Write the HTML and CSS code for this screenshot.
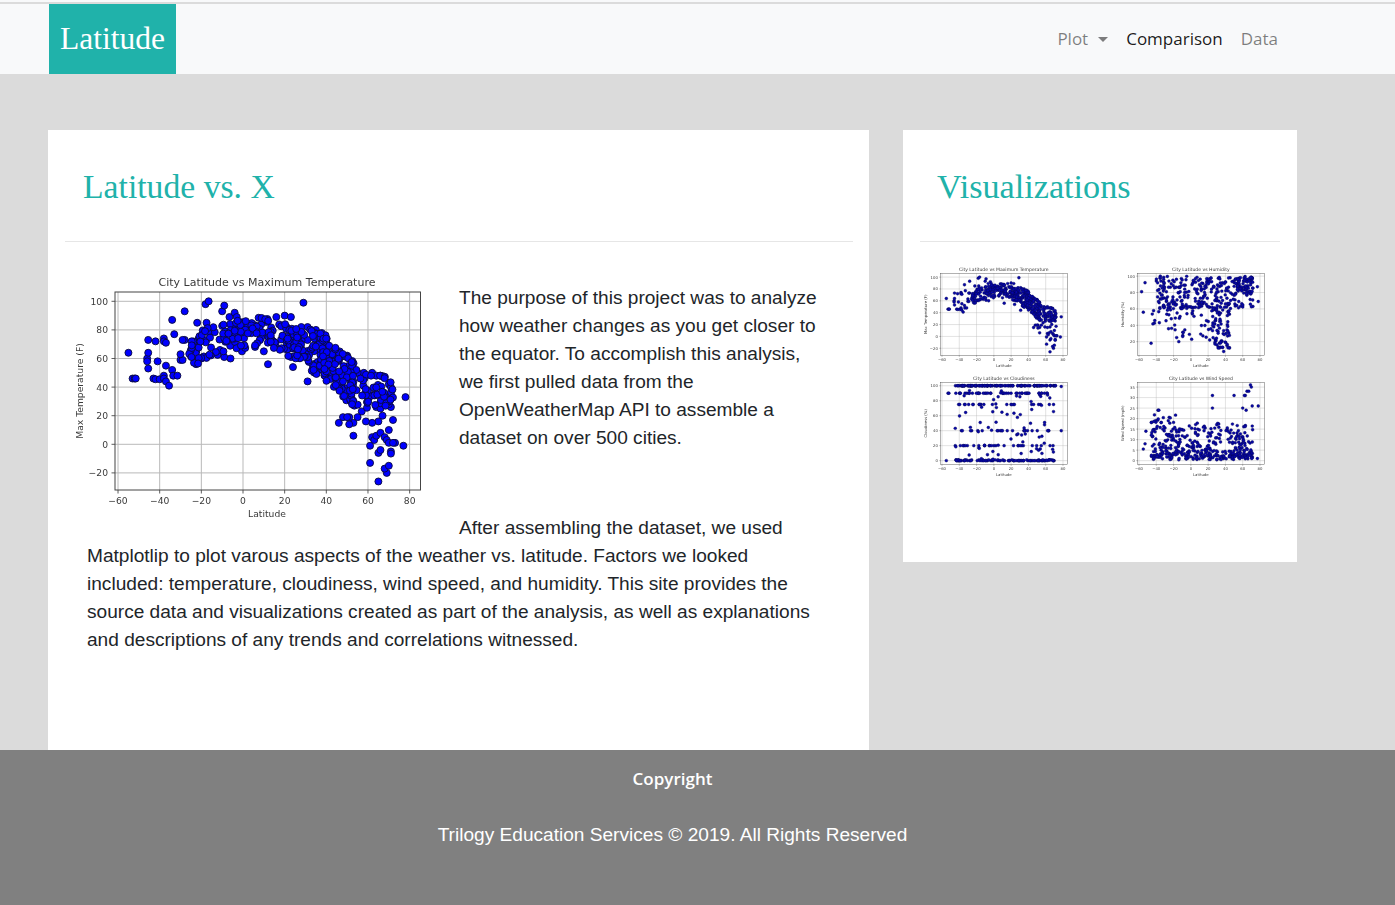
FILE: index.html
```html
<!DOCTYPE html>
<html lang="en">

<head>
    <meta charset="UTF-8">
    <meta name="viewport" content="width=device-width, initial-scale=1.0">
    <title>Latitude</title>

    <link rel="stylesheet" href="styles.css">
</head>

<body>

    <div class="top-strip"></div>
    <nav class="navbar">
        <a class="brand" href="#">Latitude</a>
        <ul class="nav-links">
            <li><a class="nav-link" href="#">Plot<span class="caret"></span></a></li>
            <li><a class="nav-link active" href="#">Comparison</a></li>
            <li><a class="nav-link" href="#">Data</a></li>
        </ul>
    </nav>

    <main class="content">
        <section class="card">
            <h1 class="card-title">Latitude vs. X</h1>
            <hr class="divider">
            <div class="copy">
                <svg class="plot plot-main" id="plot-temp" viewBox="0 0 370 255"></svg>
                <p>The purpose of this project was to analyze how weather changes as you get closer to the equator. To accomplish this analysis, we first pulled data from the OpenWeatherMap API to assemble a dataset on over 500 cities.</p>
                <p class="second">After assembling the dataset, we used Matplotlip to plot varous aspects of the weather vs. latitude. Factors we looked included: temperature, cloudiness, wind speed, and humidity. This site provides the source data and visualizations created as part of the analysis, as well as explanations and descriptions of any trends and correlations witnessed.</p>
            </div>
        </section>

        <aside class="card card-side">
            <h1 class="card-title">Visualizations</h1>
            <hr class="divider">
            <div class="thumbs">
                <svg class="plot" id="thumb-temp" viewBox="0 0 370 255"></svg>
                <svg class="plot" id="thumb-humidity" viewBox="0 0 370 255"></svg>
                <svg class="plot" id="thumb-cloud" viewBox="0 0 370 255"></svg>
                <svg class="plot" id="thumb-wind" viewBox="0 0 370 255"></svg>
            </div>
        </aside>
    </main>

    <footer class="footer">
        <p class="footer-title">Copyright</p>
        <p class="footer-text">Trilogy Education Services © 2019. All Rights Reserved</p>
    </footer>

    <script src="charts.js"></script>

</body>

</html>
```

FILE: styles.css
```css
* {
    padding: 0;
    margin: 0;
    box-sizing: border-box;
}

body {
    background-color: #dbdbdb;
    font-family: "Liberation Sans", Arial, sans-serif;
    color: #212529;
}

a {
    text-decoration: none;
}

.top-strip {
    height: 4px;
    background-color: #f8f9fa;
    border-bottom: 2px solid #dbdbdb;
}

.navbar {
    height: 70px;
    background-color: #f8f9fa;
    display: flex;
    align-items: stretch;
    justify-content: space-between;
    padding: 0 117px 0 49px;
}

.brand {
    width: 127px;
    background-color: #20b2aa;
    color: #fff;
    font-family: "Liberation Serif", serif;
    font-size: 31.5px;
    line-height: 70px;
    text-align: center;
}

.nav-links {
    list-style: none;
    display: flex;
    align-items: center;
    gap: 18px;
    padding-bottom: 2px;
    font-family: "Open Sans", sans-serif;
    font-size: 17px;
}

.nav-link {
    color: rgba(0, 0, 0, .5);
}

.nav-link.active {
    color: rgba(0, 0, 0, .9);
}

.caret {
    display: inline-block;
    margin-left: 10px;
    vertical-align: 3px;
    border-top: 5px solid rgba(0, 0, 0, .5);
    border-left: 5.5px solid transparent;
    border-right: 5.5px solid transparent;
}

.content {
    display: grid;
    grid-template-columns: 821px 394px;
    column-gap: 34px;
    align-items: start;
    padding: 56px 98px 0 48px;
}

.card {
    background-color: #fff;
    height: 620px;
    padding: 0 16px 0 17px;
}

.card-side {
    height: 432px;
    padding: 0 17px;
}

.card-title {
    color: #20b2aa;
    font-family: "Liberation Serif", serif;
    font-size: 33.7px;
    font-weight: normal;
    line-height: 40px;
    padding: 37px 0 0 18px;
    height: 111px;
}

.card-side .card-title {
    padding-left: 17px;
    font-size: 34.2px;
}

.divider {
    border: none;
    border-top: 1px solid #e6e6e6;
}

.copy {
    padding: 42px 33px 0 22px;
    font-size: 19.1px;
    line-height: 28px;
}

.copy .second {
    margin-top: 62px;
}

.plot {
    display: block;
    width: 153.5px;
    height: 106px;
    filter: blur(.5px);
}

.plot-main {
    float: left;
    width: 370px;
    height: 255px;
    margin: -14px 24px 0 -22px;
    filter: blur(.4px);
}

.thumbs {
    display: grid;
    grid-template-columns: 153.5px 153.5px;
    column-gap: 43.5px;
    row-gap: 3px;
    margin-top: 22px;
}

.thumbs circle {
    fill: #0808a8;
    stroke: #050550;
}

.footer {
    height: 155px;
    background-color: #808080;
    color: #fff;
    padding: 18px 50px 0 0;
    text-align: center;
}

.footer-title {
    font-family: "Open Sans", sans-serif;
    font-size: 17px;
    font-weight: 600;
    line-height: 22px;
}

.footer-text {
    margin-top: 34px;
    font-size: 19.1px;
    line-height: 22px;
}
```

FILE: charts.js
```js
// scatter plots, drawn the way matplotlib lays them out
var NS = 'http://www.w3.org/2000/svg';

// small seeded random so the plots look the same every load
function rng(seed) {
    return function () {
        seed = (seed * 1664525 + 1013904223) % 4294967296;
        return seed / 4294967296;
    };
}

function add(svg, tag, attrs, text) {
    var el = document.createElementNS(NS, tag);
    for (var k in attrs) el.setAttribute(k, attrs[k]);
    if (text !== undefined) el.textContent = text;
    svg.appendChild(el);
    return el;
}

// the points that stand out in the temperature plot
var tempPoints = [
    [-55,64],[-53,46],[-52,46],[-51.5,46],[-46,60],[-46,58],[-45.5,73],[-45.5,64],[-45.5,53],[-43,46],
    [-42,45.5],[-42,72],[-41,58],[-40,45.5],[-38,74],[-38,72],[-38,48],[-38,46],[-37,71],[-37,55],
    [-37,44],[-35.5,41],[-34,87],[-34,52],[-33.5,48],[-31.5,48],[-33,77],[-28,93],[-28,73],[-29,73],
    [-30,59],[-29,59],[-30,63],[-25,62],[-22,85],[-20,60],[-18,98],[-16.5,100],[-17.5,85],[-10,93],
    [-9,97],[-9,61],[-6,60],[-0.5,65],[-6.5,89],[-4,92],[-3,89],[10,65],[12,56],[16,89],[20,90],
    [23,89],[24,54],[29,99],[28,82],[31,82],[31,44],[35,80],[50,62],[51,51],[78,33],[77,-1],[73,1],
    [72,17],[71,26],[71,33],[71,-5],[71,-6.5],[70,10],[69,-20],[68,-17],[70,-15],[65,-26],[61,-13],
    [61,-1],[62,5],[63,3],[64,6],[65,-6],[66,-4],[66,8],[68,5],[69,3],[70,1],[72,1],[67,20],[65,16],
    [62,15],[59,16],[57,23],[55,19],[53,6],[53,15],[51,19],[51,14],[46,15],[48,19],[50,19],[64,26],
    [66,25],[68,28],[70,28],[62,50],[58,50],[55,50],[66,48],[64,48],[70,42],[71,40]
];

function tempCurve(lat) {
    if (lat < 15) return 78 - (lat - 8) * (lat - 8) * 0.012;
    if (lat < 40) return 77 - (lat - 15) * 0.65;
    if (lat < 58) return 60 - (lat - 40) * 1.4;
    return 37;
}

function tempSpread(lat) {
    if (lat < 32) return 22;
    if (lat < 58) return 32;
    return 24;
}

(function () {
    var r = rng(11);
    for (var i = 0; i < 400; i++) {
        var lat = -26 + r() * 98;
        if (r() < 0.3) lat = 25 + r() * 28;
        tempPoints.push([lat, tempCurve(lat) + (r() - 0.5) * tempSpread(lat)]);
    }
})();

function makeHumidity() {
    var r = rng(23), pts = [];
    for (var i = 0; i < 260; i++) {
        pts.push([-40 + r() * 112, 60 + r() * 40]);
    }
    for (i = 0; i < 70; i++) pts.push([-45 + r() * 80, 20 + r() * 50]);
    for (i = 0; i < 70; i++) pts.push([25 + r() * 20, 12 + r() * 55]);
    for (i = 0; i < 60; i++) pts.push([50 + r() * 22, 78 + r() * 22]);
    pts.push([-55,56],[-57,81],[-53,92],[78,69],[77,87],[-46,18],[38,8]);
    return pts;
}

function makeCloud() {
    var r = rng(37), pts = [], levels = [0, 0, 0, 1, 20, 40, 75, 90, 100, 100, 100, 100];
    for (var i = 0; i < 340; i++) {
        pts.push([-46 + r() * 118, levels[Math.floor(r() * levels.length)]]);
    }
    for (i = 0; i < 70; i++) pts.push([-45 + r() * 115, r() * 100]);
    pts.push([-55,0],[-53,90],[-52,90],[78,40],[78,99]);
    return pts;
}

function makeWind() {
    var r = rng(51), pts = [];
    for (var i = 0; i < 380; i++) {
        var u = r();
        pts.push([-46 + r() * 118, 0.3 + u * u * 16 + r() * 2]);
    }
    for (i = 0; i < 30; i++) pts.push([-46 + r() * 30, 10 + r() * 12]);
    pts.push([-55,5.5],[-53,8],[-52,14],[-38,24],[-37,24],[25,31],[25,25],[50,31],[60,25],[63,31],
        [65,33],[67,33],[69,36],[70,35],[71,26],[78,26],[77,1],[64,24],[62,31]);
    return pts;
}

// y0/y1 are [value, y in the 370x255 box]
function drawPlot(id, cfg) {
    var svg = document.getElementById(id);
    var left = 50, right = 355.5, top = 22, bottom = 220;
    var xAt = function (v) { return 178 + v * 2.083; };
    var yAt = function (v) {
        return cfg.y0[1] + (v - cfg.y0[0]) * (cfg.y1[1] - cfg.y0[1]) / (cfg.y1[0] - cfg.y0[0]);
    };
    var label = { fill: '#3a3a3a', 'font-family': '"DejaVu Sans", sans-serif', 'font-size': 9.2 };
    var withAnchor = function (a, extra) {
        var o = { 'text-anchor': a };
        for (var k in label) o[k] = label[k];
        for (k in extra) o[k] = extra[k];
        return o;
    };

    for (var x = -60; x <= 80; x += 20) {
        add(svg, 'line', { x1: xAt(x), x2: xAt(x), y1: top, y2: bottom, stroke: '#b9b9b9', 'stroke-width': 1 });
        add(svg, 'line', { x1: xAt(x), x2: xAt(x), y1: bottom, y2: bottom + 3.5, stroke: '#333', 'stroke-width': 0.8 });
        add(svg, 'text', withAnchor('middle', { x: xAt(x), y: bottom + 14 }), String(x).replace('-', '\u2212'));
    }
    cfg.ticks.forEach(function (v) {
        add(svg, 'line', { x1: left, x2: right, y1: yAt(v), y2: yAt(v), stroke: '#b9b9b9', 'stroke-width': 1 });
        add(svg, 'line', { x1: left - 3.5, x2: left, y1: yAt(v), y2: yAt(v), stroke: '#333', 'stroke-width': 0.8 });
        add(svg, 'text', withAnchor('end', { x: left - 7, y: yAt(v) + 3.5 }), String(v).replace('-', '\u2212'));
    });

    cfg.points.forEach(function (p) {
        add(svg, 'circle', {
            cx: xAt(p[0]), cy: yAt(p[1]), r: 3.5,
            fill: '#0000ff', stroke: '#0a0a3a', 'stroke-width': 0.9
        });
    });

    add(svg, 'rect', { x: left, y: top, width: right - left, height: bottom - top, fill: 'none', stroke: '#444', 'stroke-width': 1 });
    add(svg, 'text', withAnchor('middle', { x: 202, y: 16, 'font-size': 11 }), cfg.title);
    add(svg, 'text', withAnchor('middle', { x: 202, y: 247 }), 'Latitude');
    add(svg, 'text', withAnchor('middle', {
        x: 0, y: 0, transform: 'translate(18 ' + (top + bottom) / 2 + ') rotate(-90)'
    }), cfg.ylabel);
}

var tempAxis = { y0: [100, 31.3], y1: [0, 174.3], ticks: [100, 80, 60, 40, 20, 0, -20] };

function tempConfig() {
    return {
        title: 'City Latitude vs Maximum Temperature', ylabel: 'Max Temperature (F)',
        y0: tempAxis.y0, y1: tempAxis.y1, ticks: tempAxis.ticks, points: tempPoints
    };
}

drawPlot('plot-temp', tempConfig());
drawPlot('thumb-temp', tempConfig());
drawPlot('thumb-humidity', {
    title: 'City Latitude vs Humidity', ylabel: 'Humidity (%)',
    y0: [100, 29], y1: [20, 187], ticks: [100, 80, 60, 40, 20], points: makeHumidity()
});
drawPlot('thumb-cloud', {
    title: 'City Latitude vs Cloudiness', ylabel: 'Cloudiness (%)',
    y0: [100, 30.5], y1: [0, 211], ticks: [100, 80, 60, 40, 20, 0], points: makeCloud()
});
drawPlot('thumb-wind', {
    title: 'City Latitude vs Wind Speed', ylabel: 'Wind Speed (mph)',
    y0: [35, 33.7], y1: [0, 211], ticks: [35, 30, 25, 20, 15, 10, 5, 0], points: makeWind()
});
```
